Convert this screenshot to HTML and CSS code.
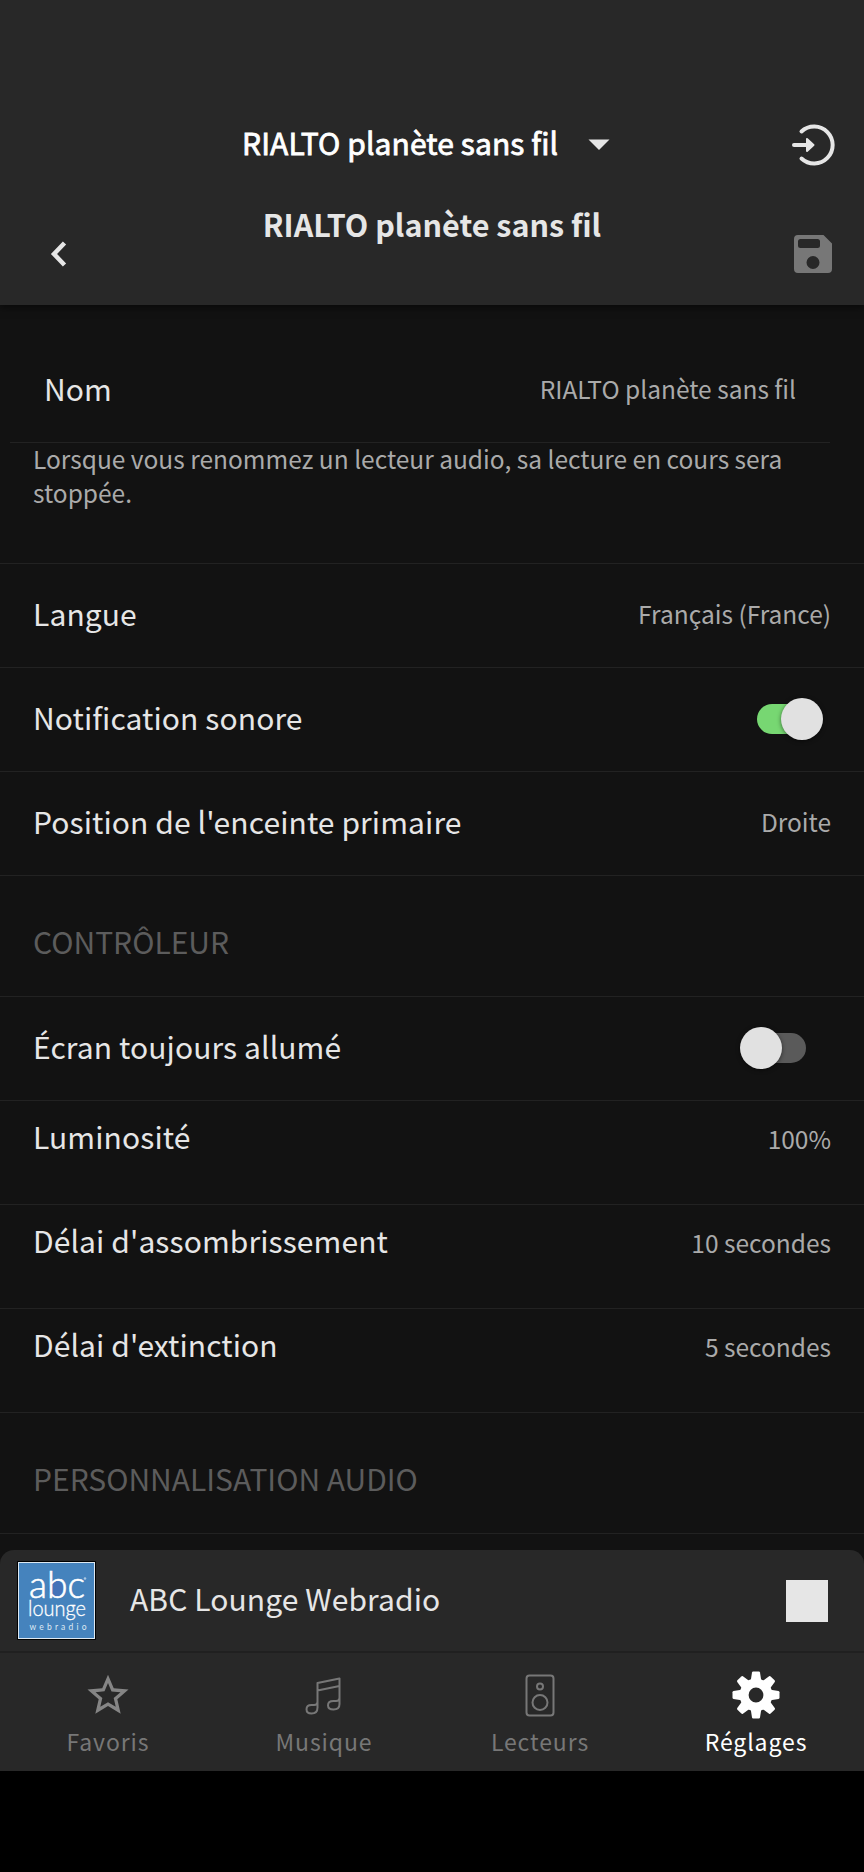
FILE: index.html
```
<!DOCTYPE html>
<html lang="fr">
<head>
  <meta charset="UTF-8" />
  <meta name="viewport" content="width=device-width, initial-scale=1" />
  <title>Réglages</title>
  <link rel="stylesheet" href="styles.css">
</head>
<body>

<header class="header">
  <div class="player-select">
    <span class="player-name">RIALTO planète sans fil</span>
    <svg class="caret" width="22" height="12" viewBox="0 0 22 12"><path d="M0.5 0.5h21L11 11z" fill="#e6e6e6"/></svg>
    <svg class="exit" width="44" height="44" viewBox="0 0 44 44" fill="none" stroke="#e6e6e6" stroke-width="4" stroke-linecap="round">
      <path d="M10.500 8.500a18.500 18.500 0 1 1 0 27"/>
      <path d="M3 22h14"/>
      <path d="M16 16v12l6.500-6z" fill="#e6e6e6" stroke-width="2" stroke-linejoin="round"/>
    </svg>
  </div>
  <div class="title-bar">
    <svg class="back" width="18" height="28" viewBox="0 0 18 28"><path d="M14.500 3L4 14l10.500 11" fill="none" stroke="#e6e6e6" stroke-width="4.500"/></svg>
    <h1>RIALTO planète sans fil</h1>
    <svg class="save" width="38" height="38" viewBox="0 0 38 38"><path fill="#777" fill-rule="evenodd" d="M4 0h25.500l8.500 8.500V34a4 4 0 0 1-4 4H4a4 4 0 0 1-4-4V4a4 4 0 0 1 4-4zM6.500 4a2.500 2.500 0 0 0-2.500 2.500v4A2.500 2.500 0 0 0 6.500 13h17a2.500 2.500 0 0 0 2.500-2.500v-4A2.500 2.500 0 0 0 23.500 4zM19 21a6.500 6.500 0 1 0 0 13 6.500 6.500 0 0 0 0-13z"/></svg>
  </div>
</header>

<main class="settings">
  <div class="row row-name">
    <span class="label">Nom</span>
    <span class="value">RIALTO planète sans fil</span>
  </div>
  <p class="hint">Lorsque vous renommez un lecteur audio, sa lecture en cours sera stoppée.</p>

  <div class="row">
    <span class="label">Langue</span>
    <span class="value">Français (France)</span>
  </div>
  <div class="row">
    <span class="label">Notification sonore</span>
    <span class="toggle on"><span class="knob"></span></span>
  </div>
  <div class="row">
    <span class="label">Position de l'enceinte primaire</span>
    <span class="value">Droite</span>
  </div>

  <h2>CONTRÔLEUR</h2>

  <div class="row">
    <span class="label">Écran toujours allumé</span>
    <span class="toggle"><span class="knob"></span></span>
  </div>
  <div class="row row-top">
    <span class="label">Luminosité</span>
    <span class="value">100%</span>
  </div>
  <div class="row row-top">
    <span class="label">Délai d'assombrissement</span>
    <span class="value">10 secondes</span>
  </div>
  <div class="row row-top">
    <span class="label">Délai d'extinction</span>
    <span class="value">5 secondes</span>
  </div>

  <h2>PERSONNALISATION AUDIO</h2>
</main>

<footer class="footer">
  <div class="now-playing">
    <svg class="cover" width="79" height="79" viewBox="0 0 79 79">
      <rect width="79" height="79" rx="1" fill="#000"/>
      <rect x="1.500" y="1.500" width="76" height="76" fill="#4583bd" stroke="#dce8f2"/>
      <circle cx="39.500" cy="28" r="8" fill="#4472b8"/>
      <g fill="#fff" font-family="Lato, sans-serif">
        <text x="12" y="36.700" font-size="37" font-weight="300" stroke="#fff" stroke-width="0.600" textLength="56" lengthAdjust="spacingAndGlyphs">abc</text>
        <text x="11" y="55" font-size="21" font-weight="300" stroke="#fff" stroke-width="0.300" textLength="58" lengthAdjust="spacingAndGlyphs">lounge</text>
        <text x="12.500" y="69" font-size="8.500" fill="#dfeaf4" textLength="57">webradio</text>
      </g>
      <circle cx="68" cy="17.500" r="1.300" fill="#a9c6e2"/>
    </svg>
    <span class="label">ABC Lounge Webradio</span>
    <button class="stop" aria-label="Stop"></button>
  </div>

  <nav class="tabs">
    <a class="tab">
      <svg width="48" height="48" viewBox="0.300 0.200 23.400 23.400"><path fill="#858585" d="M22 9.240l-7.190-.620L12 2 9.190 8.630 2 9.240l5.460 4.730L5.820 21 12 17.270 18.180 21l-1.630-7.030L22 9.240zM12 15.400l-3.760 2.270 1-4.280-3.320-2.880 4.380-.380L12 6.100l1.710 4.040 4.380.380-3.320 2.880 1 4.280L12 15.400z"/></svg>
      <span>Favoris</span>
    </a>
    <a class="tab">
      <svg width="48" height="48" viewBox="0 0 48 48" fill="none" stroke="#777" stroke-width="2" stroke-linejoin="round"><path d="M17.500 37V12l22-4.500V33c0 4-2.500 5.500-6 5.500-4 0-5.500-1.700-5.500-4.200 0-2.800 2-4.300 5.500-4.300h2.500c2.500 0 3.500-1.500 3.500-3.500M17.500 19.500l22-4.500M17.500 30.500c0 2.500-1 3.500-3.500 3.500h-2.500c-3.500 0-5 1.700-5 4.200 0 2.800 1.800 4.300 5 4.300 4 0 6-2 6-6"/></svg>
      <span>Musique</span>
    </a>
    <a class="tab">
      <svg width="48" height="48" viewBox="0 0 48 48" fill="none" stroke="#777" stroke-width="2"><rect x="10.500" y="4.500" width="27" height="40" rx="3"/><circle cx="24" cy="15.500" r="3"/><circle cx="24" cy="31.500" r="7.500"/></svg>
      <span>Lecteurs</span>
    </a>
    <a class="tab active">
      <svg width="48" height="48" viewBox="0 0 48 48">
        <defs><path id="tooth" d="M18.500 11l1.500-9.500q.2-1 1.200-1h5.600q1 0 1.200 1L29.500 11z"/></defs>
        <g fill="#fff">
          <use href="#tooth"/>
          <use href="#tooth" transform="rotate(45 24 24)"/>
          <use href="#tooth" transform="rotate(90 24 24)"/>
          <use href="#tooth" transform="rotate(135 24 24)"/>
          <use href="#tooth" transform="rotate(180 24 24)"/>
          <use href="#tooth" transform="rotate(225 24 24)"/>
          <use href="#tooth" transform="rotate(270 24 24)"/>
          <use href="#tooth" transform="rotate(315 24 24)"/>
        </g>
        <circle cx="24" cy="24" r="11.900" fill="none" stroke="#fff" stroke-width="9"/>
      </svg>
      <span>Réglages</span>
    </a>
  </nav>
</footer>

</body>
</html>
```
FILE: styles.css
```
* {
  box-sizing: border-box;
}
body {
  margin: 0;
  height: 1872px;
  display: flex;
  flex-direction: column;
  overflow: hidden;
  background: #000;
  color: #e6e6e6;
  font-family: "Noto Sans CJK SC", "Noto Sans", sans-serif;
  font-size: 30px;
}
svg {
  display: block;
  flex: none;
}
.header {
  height: 305px;
  flex: none;
  padding-top: 104px;
  background: #282828;
  box-shadow: 0 2px 8px rgba(0,0,0,0.6);
  z-index: 1;
}
.player-select {
  display: flex;
  align-items: center;
  height: 82px;
  padding: 0 29px 0 242px;
}
.player-name {
  color: #fff;
  -webkit-text-stroke: 0.8px #fff;
  line-height: 40px;
  letter-spacing: 0.100px;
  margin-top: -6px;
}
.caret {
  margin-left: 30px;
}
.exit {
  margin-left: auto;
}
.title-bar {
  display: flex;
  align-items: center;
  justify-content: space-between;
  height: 119px;
  padding: 0 32px 18px 50px;
}
.back {
  margin-top: 34px;
}
.title-bar h1 {
  margin: 0;
  padding-left: 2px;
  font-size: 30.500px;
  font-weight: 700;
  line-height: 40px;
  margin-top: -25px;
}
.save {
  margin-top: 34px;
}

.settings {
  height: 1245px;
  flex: none;
  padding-top: 29px;
  background: #121212;
}
.row {
  display: flex;
  align-items: center;
  justify-content: space-between;
  height: 104px;
  padding: 0 33px 4px;
  border-bottom: 1px solid #222;
}
.label {
  line-height: 40px;
  letter-spacing: 0.100px;
  margin-top: -2px;
}
.value {
  color: #aaa;
  font-size: 24.500px;
  line-height: 36px;
}
.row-name {
  height: 109px;
  margin: 0 34px 0 10px;
  padding: 0 34px;
}
.row-name .label {
  margin-top: -1px;
}
.row-name .value {
  margin-top: 2px;
}
.hint {
  height: 121px;
  margin: -1px 0 0;
  height: 122px;
  padding: 0 33px;
  border-bottom: 1px solid #222;
  color: #aaa;
  font-size: 24.500px;
  line-height: 33.500px;
}
.row-top {
  align-items: flex-start;
  padding-top: 16px;
}
.row-top .label {
  margin-top: -1px;
}
.row-top .value {
  margin-top: 4px;
}
h2 {
  height: 121px;
  margin: 0;
  padding: 45px 33px 0;
  border-bottom: 1px solid #222;
  color: #5c5c5c;
  font-size: 30px;
  font-weight: 400;
  line-height: 40px;
}

.toggle {
  display: flex;
  align-items: center;
  width: 50px;
  height: 30px;
  margin: 3px 25px 0 0;
  border-radius: 15px;
  background: #5a5a5a;
}
.toggle.on {
  justify-content: flex-end;
  margin-right: 24px;
  background: #77d772;
}
.knob {
  flex: none;
  width: 42px;
  height: 42px;
  margin: 0 0 0 -16px;
  border-radius: 50%;
  background: #e1e1e1;
  box-shadow: 0 1px 4px rgba(0,0,0,0.5);
}
.toggle.on .knob {
  margin: 0 -16px 0 0;
}

.footer {
  height: 221px;
  flex: none;
  background: #121212;
}
.now-playing {
  display: flex;
  align-items: center;
  height: 103px;
  padding: 0 36px 0 17px;
  border-radius: 14px 14px 0 0;
  border-bottom: 2px solid #202020;
  background: #282828;
}
.now-playing .label {
  margin: -5px 0 0 34px;
}
.stop {
  width: 42px;
  height: 42px;
  margin-left: auto;
  padding: 0;
  border: none;
  background: #e6e6e6;
}
.tabs {
  display: grid;
  grid-template-columns: repeat(4, 1fr);
  height: 118px;
  background: #282828;
}
.tab {
  display: flex;
  flex-direction: column;
  align-items: center;
  padding-top: 18px;
  color: #777;
  font-size: 23px;
  line-height: 36px;
  letter-spacing: 0.900px;
}
.tab span {
  margin-top: 4px;
}
.tab.active {
  color: #fff;
}
```
